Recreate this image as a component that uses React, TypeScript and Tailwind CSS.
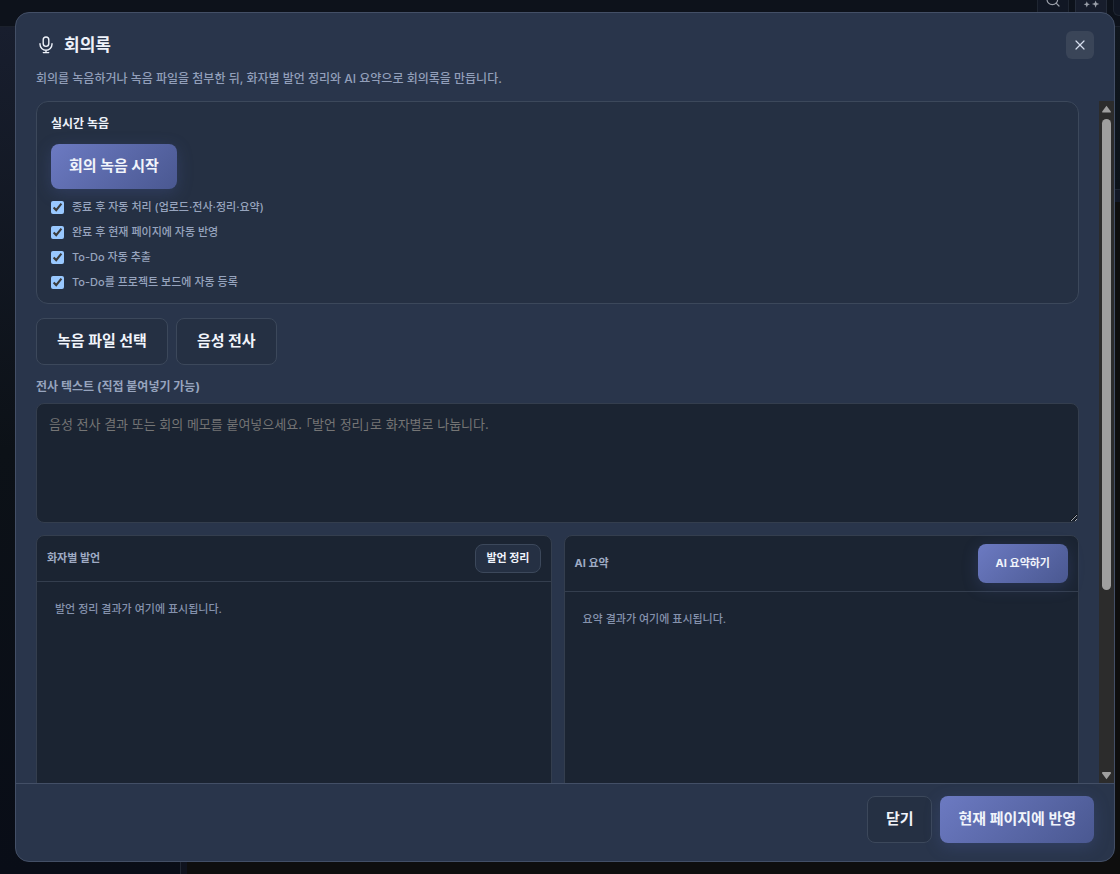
import type { ReactNode } from "react";
import { X, Search } from "lucide-react";

const primary =
  "rounded-lg bg-linear-135 from-[#6c7ac2] to-[#4a5891] font-bold text-[#f1f4fb] shadow-[0_4px_16px_rgba(80,98,170,0.28)]";
const secondary =
  "rounded-lg border border-[#3c485b] bg-[#253043] font-bold text-[#f1f4fb]";

const options = [
  "종료 후 자동 처리 (업로드·전사·정리·요약)",
  "완료 후 현재 페이지에 자동 반영",
  "To-Do 자동 추출",
  "To-Do를 프로젝트 보드에 자동 등록",
];

function MicIcon() {
  return (
    <svg width="20" height="20" viewBox="0 0 20 20" fill="none" stroke="#eef2fa" strokeWidth="1.4" strokeLinecap="round" aria-hidden="true">
      <rect x="7.2" y="2" width="5.6" height="9.4" rx="2.8" />
      <path d="M4 8.8v.4a6 6 0 0 0 12 0v-.4M10 15.2v2.4M7.3 17.6h5.4" />
    </svg>
  );
}

function SparkleIcon() {
  return (
    <svg width="18" height="18" viewBox="0 0 18 18" fill="#9a9fa9" aria-hidden="true">
      <path d="M9 3l1 3.6 1 1.4-1 .8H8L7 8l1-1.4zM4.8 11.2l.9 2.2 2.2.9-2.2.9-.9 2.2-.9-2.2-2.2-.9 2.2-.9zM13.6 10.4l1 2.7 2.7 1-2.7 1-1 2.7-1-2.7-2.7-1 2.7-1z" />
    </svg>
  );
}

function Backdrop() {
  return (
    <div className="absolute inset-0 flex flex-col bg-[#0e0e0e]" aria-hidden="true">
      <div className="flex h-[27px] items-start justify-end gap-1.5 border-b border-[#1b212c] bg-[#0d121b]">
        <div className="flex h-4 w-8 items-end justify-center border-x border-[#1f2632] bg-[#111724] pb-2 text-[#9a9fa9]">
          <Search size={16} strokeWidth={1.8} />
        </div>
        <div className="flex h-4 w-8 items-end justify-center border-x border-[#252c3a] bg-[#171d2c] pb-2">
          <SparkleIcon />
        </div>
        <div className="h-4 w-[7px] rounded-bl-md border-b border-l border-[#1f2632] bg-[#111724]" />
      </div>
      <div className="flex flex-1">
        <div className="w-[181px] border-r border-[#222834] bg-linear-to-b from-[#181e2e] via-[#0c1117] to-[#090d17]" />
        <div className="w-1.5 bg-[#0f131e]" />
        <div className="flex flex-1 flex-col items-end">
          <div className="h-[163px] w-2 border-b border-[#1f2632] bg-linear-to-b from-[#10171f] to-[#0c131a]" />
          <div className="h-3 w-2 bg-[#121826]" />
        </div>
      </div>
    </div>
  );
}

function ResultPanel({ title, action, children }: { title: string; action: ReactNode; children: ReactNode }) {
  return (
    <section className="flex h-[340px] min-w-0 flex-1 flex-col rounded-lg border border-[#343e4e] bg-[#1b2432]">
      <div className="flex items-center justify-between border-b border-[#343e4e] px-2.5 py-2">
        <h3 className="text-[11px] font-bold text-[#9fabc4]">{title}</h3>
        {action}
      </div>
      <p className="p-[18px] text-[11px] leading-[18px] font-medium text-[#8592ad]">{children}</p>
    </section>
  );
}

function ScrollTrack() {
  return (
    <div className="flex w-[15px] flex-col items-center bg-[#2c2c2c] pt-1 pb-[3px]" aria-hidden="true">
      <svg width="9" height="14" viewBox="0 0 9 14" fill="#9f9f9f">
        <path d="M4.5 0.8 8.8 6.4v1.2H.2V6.4z" />
      </svg>
      <div className="w-[9px] flex-[471] rounded-full bg-[#9f9f9f]" />
      <div className="flex-[182]" />
      <svg width="9" height="8" viewBox="0 0 9 8" fill="#9f9f9f">
        <path d="M4.5 7.2 8.8 1.6V0H.2v1.6z" />
      </svg>
    </div>
  );
}

export default function App() {
  return (
    <div lang="ko" className="relative flex h-screen justify-end overflow-hidden py-3 pr-[5px] pl-[15px] font-['Inter','Noto_Sans_CJK_KR',sans-serif] [color-scheme:dark]">
      <Backdrop />
      <main role="dialog" aria-labelledby="title" className="relative flex w-full max-w-[1100px] flex-col overflow-hidden rounded-[14px] border border-[#434f66] bg-[#29354b]">
        <header className="px-5 pt-[18px] pb-3">
          <div className="flex items-center justify-between">
            <h1 id="title" className="flex items-center gap-2 text-[17px] leading-7 font-bold text-[#eef2fa]">
              <MicIcon />
              회의록
            </h1>
            <button aria-label="닫기" className="flex size-7 items-center justify-center rounded-md bg-[#3a4558] text-[#d5deee]">
              <X size={16} strokeWidth={1.8} />
            </button>
          </div>
          <p className="mt-2.5 text-xs leading-5 font-medium text-[#929fba]">
            회의를 녹음하거나 녹음 파일을 첨부한 뒤, 화자별 발언 정리와 AI 요약으로 회의록을 만듭니다.
          </p>
        </header>

        <div className="flex min-h-0 flex-1">
          <div className="min-w-0 flex-1 overflow-y-auto px-5 [scrollbar-width:none]">
            <section className="rounded-xl border border-[#3c485b] bg-[#253043] px-3.5 pt-3 pb-[11px]">
              <h2 className="text-xs leading-5 font-bold text-[#eef2fa]">실시간 녹음</h2>
              <button className={`${primary} mt-2.5 h-[45px] px-[18px] text-[15px]`}>회의 녹음 시작</button>
              <div className="mt-[9px] flex flex-col gap-1.5">
                {options.map((label) => (
                  <label key={label} className="flex items-center gap-2 text-[11px] leading-[19px] font-medium text-[#97a4be]">
                    <input type="checkbox" defaultChecked className="size-[13px]" />
                    {label}
                  </label>
                ))}
              </div>
            </section>

            <div className="mt-3.5 flex gap-2">
              <button className={`${secondary} h-[47px] px-5 text-[15px]`}>녹음 파일 선택</button>
              <button className={`${secondary} h-[47px] px-5 text-[15px]`}>음성 전사</button>
            </div>

            <label htmlFor="transcript" className="mt-3 block text-xs leading-5 font-bold text-[#97a4be]">
              전사 텍스트 (직접 붙여넣기 가능)
            </label>
            <textarea
              id="transcript"
              placeholder="음성 전사 결과 또는 회의 메모를 붙여넣으세요. 「발언 정리」로 화자별로 나눕니다."
              className="mt-1.5 block h-[120px] w-full resize-y rounded-lg border border-[#343e4e] bg-[#1b2432] px-3 py-2.5 text-[13px] leading-5 text-[#eef2fa] [font-feature-settings:'palt'] placeholder:text-[#757575]"
            />

            <div className="mt-3 flex gap-3">
              <ResultPanel title="화자별 발언" action={<button className={`${secondary} h-[29px] px-2.5 text-[11px]`}>발언 정리</button>}>
                발언 정리 결과가 여기에 표시됩니다.
              </ResultPanel>
              <ResultPanel title="AI 요약" action={<button className={`${primary} h-[39px] px-[18px] text-[11px]`}>AI 요약하기</button>}>
                요약 결과가 여기에 표시됩니다.
              </ResultPanel>
            </div>
          </div>
          <ScrollTrack />
        </div>

        <footer className="flex justify-end gap-2 border-t border-[#434f66] px-5 pt-3 pb-[18px]">
          <button className={`${secondary} h-[47px] px-[18px] text-[15px]`}>닫기</button>
          <button className={`${primary} h-[47px] px-[18px] text-[15px]`}>현재 페이지에 반영</button>
        </footer>
      </main>
    </div>
  );
}
